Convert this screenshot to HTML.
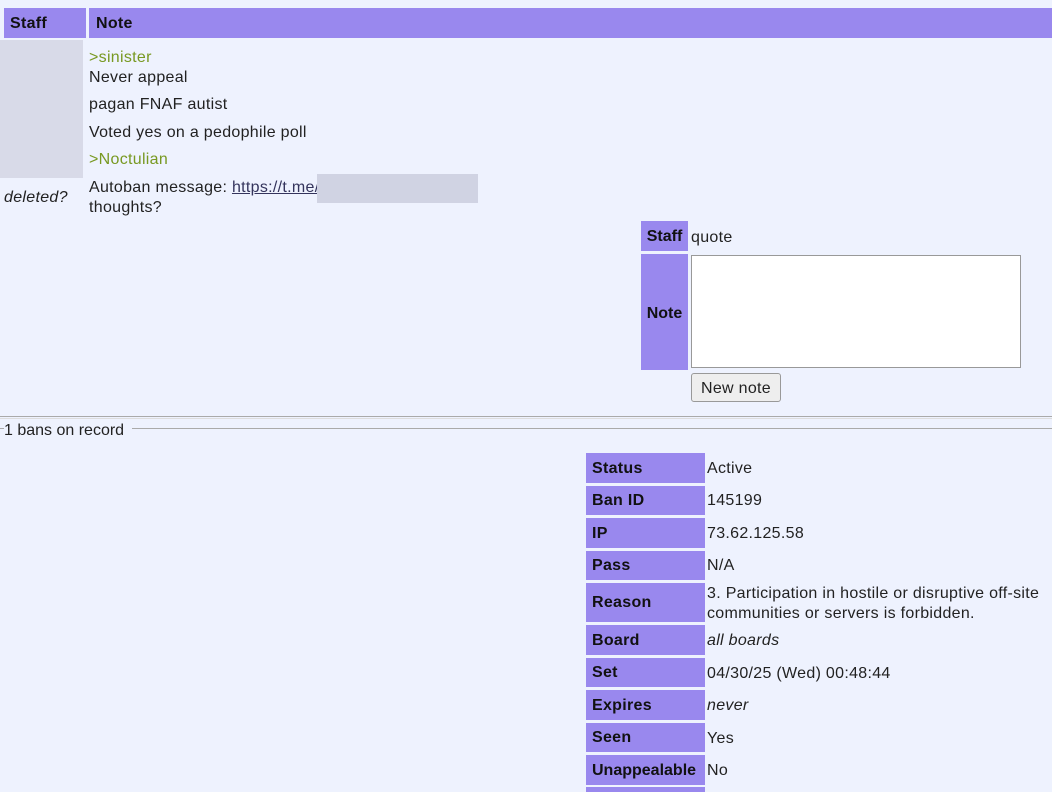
<!DOCTYPE html>
<html><head><style>
body{margin:0;width:1052px;height:788px;background:#eef2fe;font-family:"Liberation Sans",sans-serif;font-size:16px;letter-spacing:0.3px;color:#222;position:relative;overflow:hidden}
.a{position:absolute;white-space:nowrap;line-height:18px}
.h{position:absolute;background:#9988ee;font-weight:bold;color:#111}
.g{color:#789922}
</style></head><body>
<div class="h" style="left:4px;top:8px;width:82px;height:30px;line-height:31px;padding-left:6px;box-sizing:border-box">Staff</div>
<div class="h" style="left:89px;top:8px;width:963px;height:30px;line-height:31px;padding-left:7px;box-sizing:border-box">Note</div>
<div style="position:absolute;left:0;top:40px;width:83px;height:138px;background:#d8dae8"></div>
<div class="a g" style="left:89px;top:49px">&gt;sinister</div>
<div class="a" style="left:89px;top:69px">Never appeal</div>
<div class="a" style="left:89px;top:96px">pagan FNAF autist</div>
<div class="a" style="left:89px;top:124px">Voted yes on a pedophile poll</div>
<div class="a g" style="left:89px;top:151px">&gt;Noctulian</div>
<div class="a" style="left:89px;top:179px">Autoban message: <span style="text-decoration:underline;color:#34345c">https://t.me/</span></div>
<div style="position:absolute;left:317px;top:174px;width:161px;height:29px;background:#d0d3e3"></div>
<div class="a" style="left:89px;top:199px">thoughts?</div>
<div class="a" style="left:4px;top:189px;font-style:italic">deleted?</div>

<div class="h" style="left:641px;top:221px;width:47px;height:30px;line-height:32px;text-align:center;letter-spacing:0">Staff</div>
<div class="a" style="left:691px;top:229px">quote</div>
<div class="h" style="left:641px;top:254px;width:47px;height:116px;line-height:119px;text-align:center;letter-spacing:0">Note</div>
<div style="position:absolute;left:691px;top:255px;width:330px;height:113px;background:#fff;border:1px solid #999;box-sizing:border-box"></div>
<div style="position:absolute;left:691px;top:373px;width:90px;height:29px;background:#eee;border:1px solid #999;border-radius:3px;box-sizing:border-box;text-align:center;line-height:29px">New note</div>

<div style="position:absolute;left:0;top:416px;width:1052px;height:1px;border-top:1px solid #aaa;border-bottom:1px solid #ddd"></div>
<div style="position:absolute;left:0;top:428px;width:4px;border-top:1px solid #aaa"></div>
<div style="position:absolute;left:132px;top:428px;width:920px;border-top:1px solid #aaa"></div>
<div class="a" style="left:4px;top:422px;letter-spacing:0">1 bans on record</div>

<div class="h" style="left:586px;top:453px;width:119px;height:30px;line-height:31px;padding-left:6px;box-sizing:border-box">Status</div>
<div class="a" style="left:707px;top:460px">Active</div>
<div class="h" style="left:586px;top:486px;width:119px;height:29px;line-height:30px;padding-left:6px;box-sizing:border-box">Ban ID</div>
<div class="a" style="left:707px;top:492px">145199</div>
<div class="h" style="left:586px;top:518px;width:119px;height:30px;line-height:31px;padding-left:6px;box-sizing:border-box">IP</div>
<div class="a" style="left:707px;top:525px">73.62.125.58</div>
<div class="h" style="left:586px;top:551px;width:119px;height:29px;line-height:30px;padding-left:6px;box-sizing:border-box">Pass</div>
<div class="a" style="left:707px;top:557px">N/A</div>
<div class="h" style="left:586px;top:583px;width:119px;height:39px;line-height:40px;padding-left:6px;box-sizing:border-box">Reason</div>
<div class="a" style="left:707px;top:585px">3. Participation in hostile or disruptive off-site</div>
<div class="a" style="left:707px;top:605px">communities or servers is forbidden.</div>
<div class="h" style="left:586px;top:625px;width:119px;height:30px;line-height:31px;padding-left:6px;box-sizing:border-box">Board</div>
<div class="a" style="left:707px;top:632px;font-style:italic">all boards</div>
<div class="h" style="left:586px;top:658px;width:119px;height:29px;line-height:30px;padding-left:6px;box-sizing:border-box">Set</div>
<div class="a" style="left:707px;top:665px">04/30/25 (Wed) 00:48:44</div>
<div class="h" style="left:586px;top:690px;width:119px;height:30px;line-height:31px;padding-left:6px;box-sizing:border-box">Expires</div>
<div class="a" style="left:707px;top:697px;font-style:italic">never</div>
<div class="h" style="left:586px;top:723px;width:119px;height:29px;line-height:30px;padding-left:6px;box-sizing:border-box">Seen</div>
<div class="a" style="left:707px;top:730px">Yes</div>
<div class="h" style="left:586px;top:755px;width:119px;height:30px;line-height:31px;padding-left:6px;box-sizing:border-box;letter-spacing:0">Unappealable</div>
<div class="a" style="left:707px;top:762px">No</div>
<div class="h" style="left:586px;top:787px;width:119px;height:5px"></div>
</body></html>
